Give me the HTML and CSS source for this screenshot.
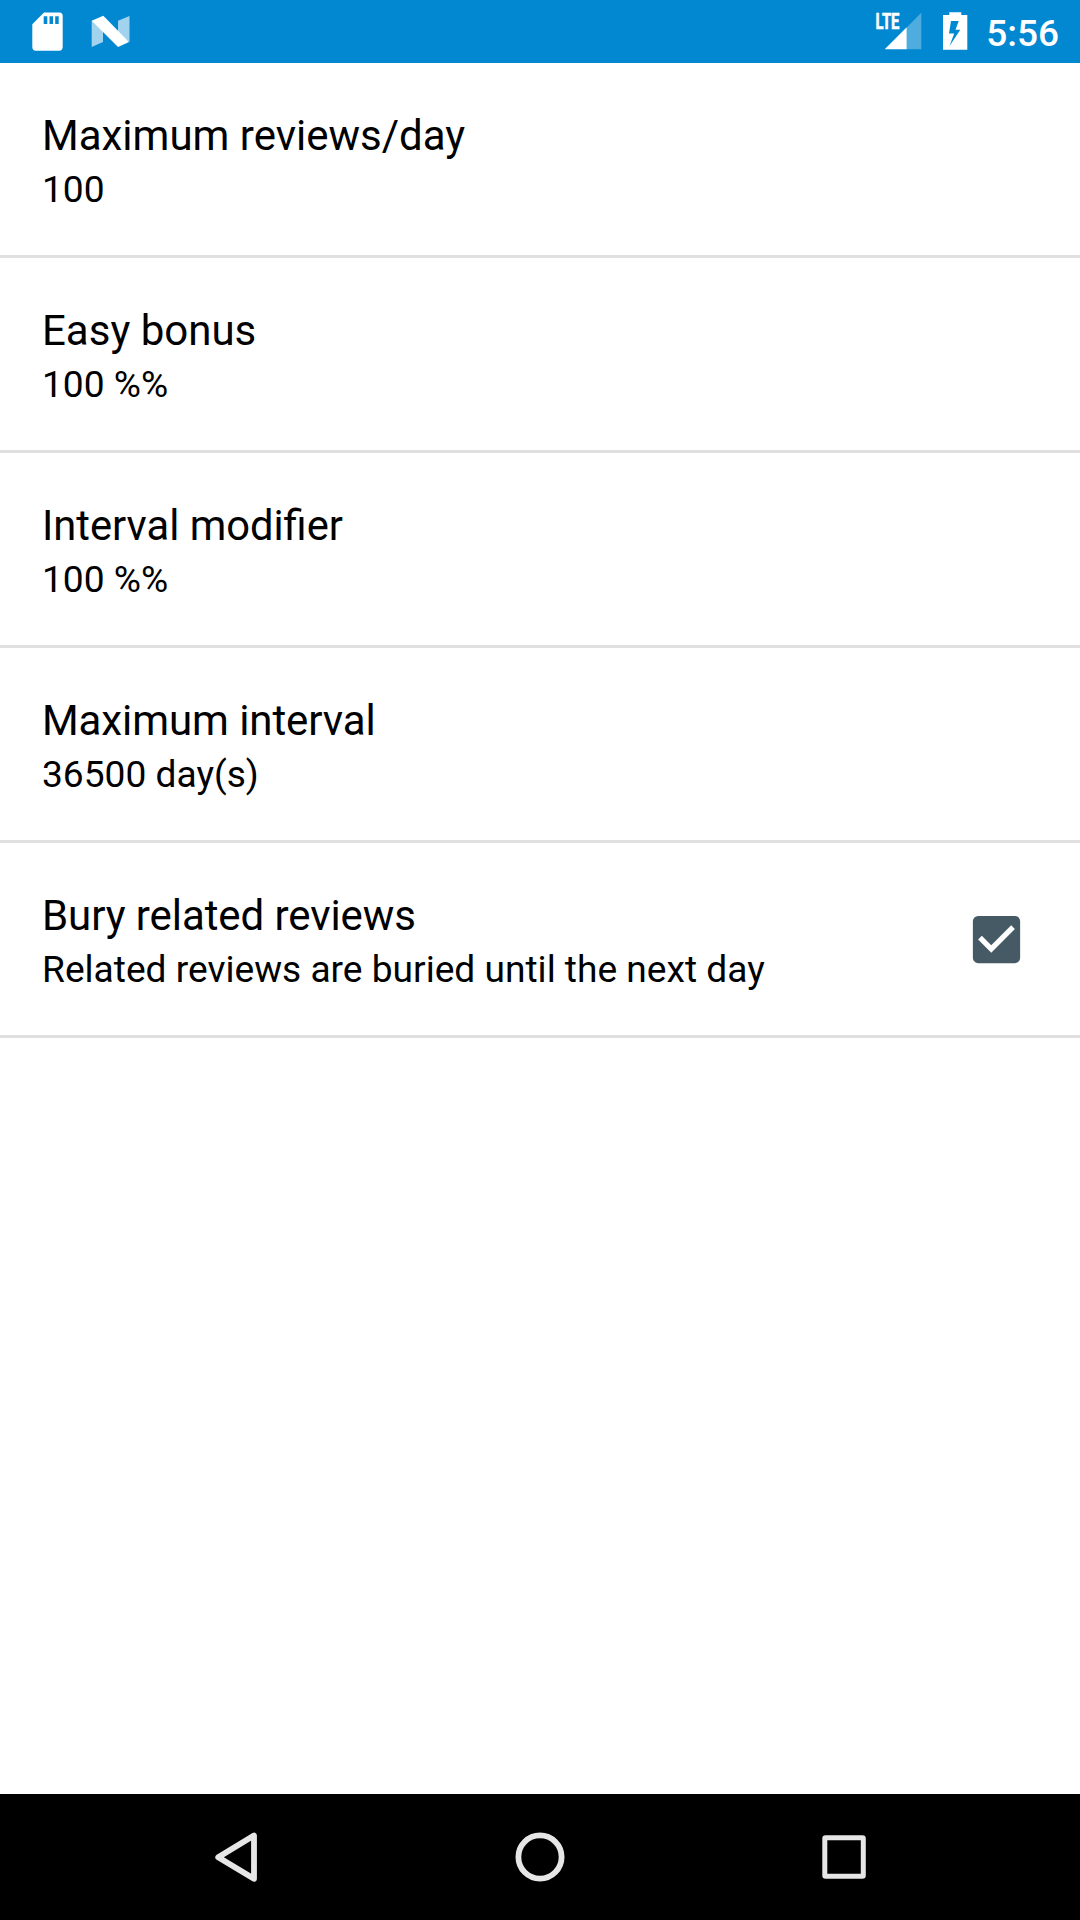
FILE: index.html
```html
<!DOCTYPE html>
<html lang="en">
<head>
<meta charset="utf-8">
<title>Reviews</title>
<link rel="stylesheet" href="styles.css">
</head>
<body>
<header class="status-bar">
  <svg class="sd-icon" viewBox="32 12 31 39" width="31" height="39">
    <path fill="#fff" fill-rule="evenodd" d="M44 12.5H59.5Q62.7 12.5 62.7 16V47Q62.7 50.7 59 50.7H36Q32.3 50.7 32.3 47V24.2ZM43.7 16.3V24H47.3V16.3ZM49.5 16.3V24H53V16.3ZM55.2 16.3V24H58.7V16.3Z"/>
  </svg>
  <svg class="n-icon" viewBox="91 15 39 33" width="39" height="33">
    <path fill="#fff" fill-opacity=".63" d="M91.7 20.5L103 28V42L91.7 47ZM118 20.8L129.5 16V42L118 34Z"/>
    <path fill="#fff" d="M91.7 20.7L103.3 15.8L129 42L118 47Z"/>
  </svg>
  <svg class="signal-icon" viewBox="870 6 52 45" width="52" height="45">
    <text class="lte" x="875.5" y="29" textLength="24" lengthAdjust="spacingAndGlyphs">LTE</text>
    <path fill="#fff" fill-opacity=".3" d="M906.7 27.5L921.3 12.7V49.3H906.7Z"/>
    <path fill="#fff" d="M884.7 49.3L906.7 27.3V49.3Z"/>
  </svg>
  <svg class="battery-icon" viewBox="943 12 25 38" width="25" height="38">
    <path fill="#fff" fill-rule="evenodd" d="M949.3 12.2H961.3V15H967.3V49.8H943V15H949.3ZM951 21L949 33.5H954.2L949.5 46L960.3 29.7H955.5L958.7 21Z"/>
  </svg>
  <span class="clock">5:56</span>
</header>
<main class="settings">
  <section class="row"><div><h2 class="title">Maximum reviews/day</h2><p class="summary">100</p></div></section>
  <section class="row"><div><h2 class="title">Easy bonus</h2><p class="summary">100 %%</p></div></section>
  <section class="row"><div><h2 class="title title-tight">Interval modifier</h2><p class="summary">100 %%</p></div></section>
  <section class="row"><div><h2 class="title title-snug">Maximum interval</h2><p class="summary">36500 day(s)</p></div></section>
  <section class="row"><div><h2 class="title title-snug">Bury related reviews</h2><p class="summary">Related reviews are buried until the next day</p></div>
    <svg class="checkbox" viewBox="0 0 24 24" width="63" height="63">
      <rect x="3" y="3" width="18" height="18" rx="2" fill="#455a64"/>
      <path fill="#fff" d="M10 17L5 12L6.41 10.59L10 14.17L17.59 6.58L19 8Z"/>
    </svg>
  </section>
</main>
<nav class="nav-bar">
  <svg viewBox="0 14 100 126" width="100" height="126"><path d="M28.2 77.3L64 55.6V98.8Z" stroke-width="5.8"/></svg>
  <svg viewBox="0 14 100 126" width="100" height="126"><circle cx="50" cy="77" r="21.6" stroke-width="5.8"/></svg>
  <svg viewBox="0 14 100 126" width="100" height="126"><rect x="34.8" y="57.7" width="38.5" height="38.5" rx=".8" stroke-width="5"/></svg>
</nav>
</body>
</html>
```
FILE: styles.css
```css
body {
  margin: 0;
  height: 1920px;
  display: flex;
  flex-direction: column;
  overflow: hidden;
  background: #fff;
  color: #000;
  font-family: Roboto, sans-serif;
}

svg {
  display: block;
  flex: none;
}

.status-bar {
  display: flex;
  align-items: flex-start;
  box-sizing: border-box;
  height: 63px;
  padding: 6px 21px 0 32px;
  background: #0288d1;
  color: #fff;
}

.sd-icon {
  margin-top: 6px;
}

.n-icon {
  margin: 9px 0 0 28px;
}

.signal-icon {
  margin-left: auto;
  overflow: visible;
}

.lte {
  fill: #fff;
  stroke: #fff;
  stroke-width: .6px;
  font: 700 21.5px Roboto, sans-serif;
}

.battery-icon {
  margin: 6px 18px 0 21px;
}

.clock {
  margin-top: 6px;
  font-size: 37px;
  font-weight: 500;
  line-height: 43px;
}

.settings {
  flex: 1;
}

.row {
  display: flex;
  align-items: flex-start;
  justify-content: space-between;
  box-sizing: border-box;
  height: 195px;
  padding: 48px 52px 0 42px;
  border-bottom: 3px solid #e0e0e0;
}

.title {
  margin: 0;
  font-size: 42px;
  font-weight: 400;
  line-height: 50px;
}

.title-tight {
  font-size: 41.7px;
}

.title-snug {
  letter-spacing: -.08px;
}

.summary {
  margin: 7px 0 0;
  font-size: 37.13px;
  line-height: 44px;
}

.checkbox {
  margin: 16.5px .5px 0 0;
}

.nav-bar {
  display: flex;
  justify-content: center;
  gap: 200px;
  height: 126px;
  background: #000;
  fill: none;
  stroke: #e6e6e6;
  stroke-linejoin: round;
}
```
